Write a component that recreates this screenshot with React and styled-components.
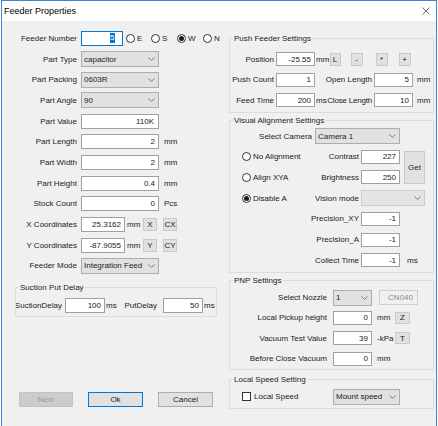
import React from 'react';
import styled, { createGlobalStyle } from 'styled-components';

const GlobalStyle = createGlobalStyle`
  html, body { margin: 0; padding: 0; background: #ffffff; }
  body {
    font-family: "Liberation Sans", Arial, sans-serif;
    font-size: 8px;
    color: #1b1b1b;
  }
  * { box-sizing: border-box; }
`;

// window frame
const Window = styled.div`
  margin-left: 1px;
  width: 436px;
  height: 426px;
  border: 1px solid #3b86d1;
  border-bottom: none;
  background: #f0f0f0;
  display: flex;
  flex-direction: column;
`;

const TitleBar = styled.div`
  flex: none;
  height: 20px;
  background: #ffffff;
  display: flex;
  align-items: center;
  justify-content: space-between;
  padding: 0 6px 0 2px;
  font-size: 9px;
  color: #000;
`;

const Body = styled.div`
  flex: 1;
  display: flex;
`;

const LeftCol = styled.div`
  flex: none;
  width: 227px;
  padding-top: 7px;
  display: flex;
  flex-direction: column;
`;

const RightCol = styled.div`
  flex: none;
  width: 205px;
  padding-top: 11.5px;
  display: flex;
  flex-direction: column;
`;

const Row = styled.div`
  display: flex;
  align-items: center;
  height: ${p => p.$h || 20.7}px;
  padding-left: ${p => p.$pl || 0}px;
`;

const Label = styled.span`
  flex: none;
  width: ${p => p.$w}px;
  margin-right: ${p => p.$gap ?? 4}px;
  text-align: right;
  white-space: nowrap;
  letter-spacing: ${p => p.$ls || 0}px;
`;

const ClipLabel = styled.span`
  flex: none;
  width: ${p => p.$w}px;
  margin-right: ${p => p.$gap ?? 3}px;
  display: flex;
  justify-content: flex-end;
  overflow: hidden;
  white-space: nowrap;
`;

const TextBox = styled.div`
  flex: none;
  width: ${p => p.$w}px;
  height: ${p => p.$h || 15}px;
  display: flex;
  align-items: center;
  justify-content: flex-end;
  padding-right: ${p => p.$pr ?? 3}px;
  background: #ffffff;
  border: 1px solid ${p => (p.$focus ? '#0078d7' : '#a0a0a0')};
  white-space: nowrap;
`;

const Selected = styled.span`
  background: #0078d7;
  color: #ffffff;
  line-height: 10px;
  padding: 0 0.5px;
`;

const Unit = styled.span`
  flex: none;
  width: ${p => (p.$w ? `${p.$w}px` : 'auto')};
  padding-left: ${p => p.$pl ?? 4}px;
  white-space: nowrap;
`;

const Combo = styled.div`
  flex: none;
  width: ${p => p.$w}px;
  height: 16px;
  display: flex;
  align-items: center;
  justify-content: space-between;
  padding: 0 3px 0 2px;
  background: ${p => (p.$disabled ? '#e4e4e4' : '#e1e1e1')};
  border: 1px solid ${p => (p.$disabled ? '#cccccc' : '#adadad')};
  white-space: nowrap;
  grid-column: ${p => p.$span || 'auto'};
`;

const SmallBtn = styled.div`
  flex: none;
  width: ${p => p.$w || 13}px;
  height: ${p => p.$h || 13}px;
  margin-left: ${p => p.$ml || 0}px;
  display: flex;
  align-items: center;
  justify-content: center;
  background: #e1e1e1;
  border: 1px solid #c9c9c9;
`;

const DisabledBox = styled.div`
  flex: none;
  width: ${p => p.$w}px;
  height: 15px;
  margin-left: ${p => p.$ml || 0}px;
  display: flex;
  align-items: center;
  justify-content: flex-end;
  padding-right: 4px;
  color: #8a8a8a;
  background: #f0f0f0;
  border: 1px solid #cfcfcf;
`;

const RadioItem = styled.span`
  flex: none;
  display: inline-flex;
  align-items: center;
  gap: 2px;
  width: ${p => (p.$w ? `${p.$w}px` : 'auto')};
  margin-left: ${p => p.$ml || 0}px;
  white-space: nowrap;
`;

const RadioDot = styled.span`
  flex: none;
  width: 9px;
  height: 9px;
  border-radius: 50%;
  border: 1px solid #333333;
  background: #ffffff;
  display: flex;
  align-items: center;
  justify-content: center;
  &::after {
    content: '';
    width: 5px;
    height: 5px;
    border-radius: 50%;
    background: #1a1a1a;
    display: ${p => (p.$on ? 'block' : 'none')};
  }
`;

const CheckBox = styled.span`
  flex: none;
  width: 9px;
  height: 9px;
  border: 1px solid #333333;
  background: #ffffff;
  margin-right: 1px;
`;

const Group = styled.fieldset`
  margin: ${p => p.$m || 0};
  padding: ${p => p.$pad || 0};
  width: ${p => p.$w}px;
  border: 1px solid #dcdcdc;
  min-width: 0;
`;

const Legend = styled.legend`
  padding: 0 1px;
  margin-left: 3px;
  line-height: 11px;
  font-size: 8px;
`;

const VisualGrid = styled.div`
  display: grid;
  grid-template-columns: 79px 52px 43px 21px;
  grid-auto-rows: 20.7px;
  align-items: center;
`;

const GridLabel = styled.span`
  text-align: right;
  padding-right: 2px;
  white-space: nowrap;
  grid-column: 2;
`;

const GetBtn = styled.div`
  grid-column: 4;
  grid-row: 1 / 3;
  height: 33px;
  display: flex;
  align-items: center;
  justify-content: center;
  background: #e1e1e1;
  border: 1px solid #c9c9c9;
`;

const ButtonBar = styled.div`
  display: flex;
  gap: 15px;
  margin-top: 75px;
  padding-left: 17px;
`;

const DialogBtn = styled.div`
  width: ${p => p.$w}px;
  height: 15px;
  display: flex;
  align-items: center;
  justify-content: center;
  background: ${p => (p.$disabled ? '#cccccc' : '#e1e1e1')};
  color: ${p => (p.$disabled ? '#9a9a9a' : '#1b1b1b')};
  border: 1px solid ${p => (p.$primary ? '#0078d7' : p.$disabled ? '#c2c2c2' : '#adadad')};
`;

const Chevron = () => (
  <svg width="7" height="4" viewBox="0 0 7 4">
    <path d="M0.5 0.5 L3.5 3.4 L6.5 0.5" fill="none" stroke="#6e6e6e" strokeWidth="0.9" />
  </svg>
);

const CloseIcon = () => (
  <svg width="8" height="8" viewBox="0 0 8 8">
    <path d="M0.5 0.5 L7.5 7.5 M7.5 0.5 L0.5 7.5" stroke="#444" strokeWidth="0.8" />
  </svg>
);

const Select = ({ w, value, disabled, span }) => (
  <Combo $w={w} $disabled={disabled} $span={span}>
    <span>{value}</span>
    <Chevron />
  </Combo>
);

const Radio = ({ label, on, w, ml }) => (
  <RadioItem $w={w} $ml={ml}>
    <RadioDot $on={on} />
    {label}
  </RadioItem>
);

const leftFields = [
  { label: 'Part Value', value: '110K', pr: 4 },
  { label: 'Part Length', value: '2', unit: 'mm' },
  { label: 'Part Width', value: '2', unit: 'mm' },
  { label: 'Part Height', value: '0.4', unit: 'mm' },
  { label: 'Stock Count', value: '0', unit: 'Pcs' },
];

export default function App() {
  return (
    <>
      <GlobalStyle />
      <Window>
        <TitleBar>
          <span>Feeder Properties</span>
          <CloseIcon />
        </TitleBar>
        <Body>
          <LeftCol>
            <Row>
              <Label $w={75}>Feeder Number</Label>
              <TextBox $w={42} $focus $pr={7}>
                <Selected>5</Selected>
              </TextBox>
              <Radio label="E" w={25} ml={3} />
              <Radio label="S" w={26} />
              <Radio label="W" w={26} on />
              <Radio label="N" />
            </Row>
            <Row>
              <Label $w={75}>Part Type</Label>
              <Select w={78} value="capacitor" />
            </Row>
            <Row>
              <Label $w={75}>Part Packing</Label>
              <Select w={78} value="0603R" />
            </Row>
            <Row>
              <Label $w={75}>Part Angle</Label>
              <Select w={78} value="90" />
            </Row>
            {leftFields.map(f => (
              <Row key={f.label}>
                <Label $w={75}>{f.label}</Label>
                <TextBox $w={78} $pr={f.pr}>{f.value}</TextBox>
                {f.unit && <Unit $pl={5}>{f.unit}</Unit>}
              </Row>
            ))}
            <Row>
              <Label $w={75}>X Coordinates</Label>
              <TextBox $w={44}>25.3162</TextBox>
              <Unit $w={18} $pl={2}>mm</Unit>
              <SmallBtn $w={14} $h={13}>X</SmallBtn>
              <SmallBtn $w={14} $h={13} $ml={6}>CX</SmallBtn>
            </Row>
            <Row>
              <Label $w={75}>Y Coordinates</Label>
              <TextBox $w={44}>-87.9055</TextBox>
              <Unit $w={18} $pl={2}>mm</Unit>
              <SmallBtn $w={14} $h={13}>Y</SmallBtn>
              <SmallBtn $w={14} $h={13} $ml={6}>CY</SmallBtn>
            </Row>
            <Row>
              <Label $w={75}>Feeder Mode</Label>
              <Select w={78} value="Integration Feed" />
            </Row>

            <Group $w={202} $m="6px 0 0 13px" $pad="2.5px 0 0">
              <Legend>Suction Put Delay</Legend>
              <Row $h={20}>
                <ClipLabel $w={46}>SuctionDelay</ClipLabel>
                <TextBox $w={40}>100</TextBox>
                <Unit $w={12} $pl={1}>ms</Unit>
                <Label $w={40} $gap={6}>PutDelay</Label>
                <TextBox $w={40}>50</TextBox>
                <Unit $pl={1}>ms</Unit>
              </Row>
            </Group>

            <ButtonBar>
              <DialogBtn $w={54} $disabled>Next</DialogBtn>
              <DialogBtn $w={55} $primary>Ok</DialogBtn>
              <DialogBtn $w={55}>Cancel</DialogBtn>
            </ButtonBar>
          </LeftCol>

          <RightCol>
            <Group $w={205} $pad="5.25px 0 2px">
              <Legend>Push Feeder Settings</Legend>
              <Row $h={20.5}>
                <Label $w={44} $gap={2}>Position</Label>
                <TextBox $w={39} $h={14}>-25.55</TextBox>
                <Unit $w={14.5} $pl={1}>mm</Unit>
                <SmallBtn $w={11}>L</SmallBtn>
                <SmallBtn $w={12} $ml={10}>-</SmallBtn>
                <SmallBtn $w={12} $ml={13}>*</SmallBtn>
                <SmallBtn $w={12} $ml={11}>+</SmallBtn>
              </Row>
              <Row $h={20.5}>
                <Label $w={44} $gap={2}>Push Count</Label>
                <TextBox $w={39} $h={14}>1</TextBox>
                <Label $w={57} $gap={2}>Open Length</Label>
                <TextBox $w={39} $h={14}>5</TextBox>
                <Unit>mm</Unit>
              </Row>
              <Row $h={20.5}>
                <Label $w={44} $gap={2}>Feed Time</Label>
                <TextBox $w={39} $h={14}>200</TextBox>
                <Unit $w={11} $pl={1}>ms</Unit>
                <Label $w={46} $gap={2} $ls={-0.2}>Close Length</Label>
                <TextBox $w={39} $h={14}>10</TextBox>
                <Unit>mm</Unit>
              </Row>
            </Group>

            <Group $w={205} $m="1.5px 0 0" $pad="0 0 1px">
              <Legend>Visual Alignment Settings</Legend>
              <Row>
                <Label $w={82} $gap={3}>Select Camera</Label>
                <Select w={85} value="Camera 1" />
              </Row>
              <VisualGrid>
                <Radio label="No Alignment" ml={12} />
                <GridLabel>Contrast</GridLabel>
                <TextBox $w={39} $h={14}>227</TextBox>
                <GetBtn>Get</GetBtn>

                <Radio label="Align XYA" ml={12} />
                <GridLabel>Brightness</GridLabel>
                <TextBox $w={39} $h={14}>250</TextBox>

                <Radio label="Disable A" ml={12} on />
                <GridLabel>Vision mode</GridLabel>
                <Select w={64} value="" disabled span="3 / 5" />

                <GridLabel>Precision_XY</GridLabel>
                <TextBox $w={39} $h={14}>-1</TextBox>
                <span />
                <GridLabel>Precision_A</GridLabel>
                <TextBox $w={39} $h={14}>-1</TextBox>
                <span />
                <GridLabel>Collect Time</GridLabel>
                <TextBox $w={39} $h={14}>-1</TextBox>
                <Unit $pl={3}>ms</Unit>
              </VisualGrid>
            </Group>

            <Group $w={205} $m="2.5px 0 0" $pad="1.3px 0 0">
              <Legend>PNP Settings</Legend>
              <Row $h={20.4}>
                <Label $w={97} $gap={6}>Select Nozzle</Label>
                <Select w={39} value="1" />
                <DisabledBox $w={39} $ml={7}>CN040</DisabledBox>
              </Row>
              <Row $h={20.4}>
                <Label $w={97} $gap={6}>Local Pickup height</Label>
                <TextBox $w={39} $h={14}>0</TextBox>
                <Unit $w={23} $pl={5}>mm</Unit>
                <SmallBtn $w={15} $h={12}>Z</SmallBtn>
              </Row>
              <Row $h={20.4}>
                <Label $w={97} $gap={6}>Vacuum Test Value</Label>
                <TextBox $w={39} $h={14}>39</TextBox>
                <Unit $w={23} $pl={5}>-kPa</Unit>
                <SmallBtn $w={15} $h={12}>T</SmallBtn>
              </Row>
              <Row $h={20.4}>
                <Label $w={97} $gap={6}>Before Close Vacuum</Label>
                <TextBox $w={39} $h={14}>0</TextBox>
                <Unit $pl={5}>mm</Unit>
              </Row>
            </Group>

            <Group $w={205} $m="4.5px 0 0" $pad="1.5px 0 1.5px">
              <Legend>Local Speed Setting</Legend>
              <Row $h={20} $pl={12}>
                <RadioItem $w={91}>
                  <CheckBox />
                  Local Speed
                </RadioItem>
                <Select w={67} value="Mount speed" />
              </Row>
            </Group>
          </RightCol>
        </Body>
      </Window>
    </>
  );
}
